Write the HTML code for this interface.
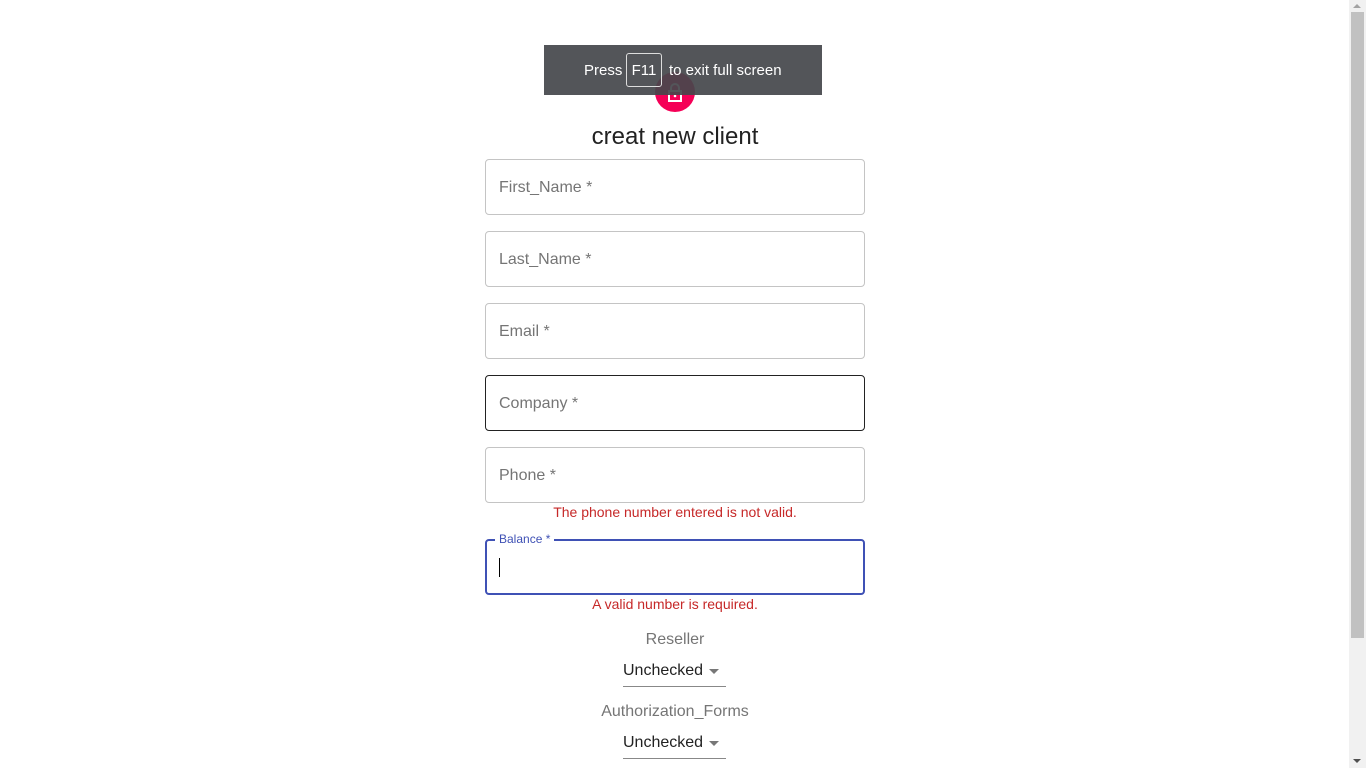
<!DOCTYPE html>
<html><head><meta charset="utf-8"><style>
*{margin:0;padding:0;box-sizing:border-box}
body{width:1366px;height:768px;overflow:hidden;background:#fff;font-family:"Liberation Sans",Roboto,sans-serif;position:relative}
.a{position:absolute}
.f{position:absolute;left:485px;width:380px;height:56px;border:1px solid #c4c4c4;border-radius:4px}
.f span{position:absolute;left:13px;top:19px;font-size:16px;color:#757575}
.err{position:absolute;left:485px;width:380px;text-align:center;font-size:14px;color:#c62828}
.lbl{position:absolute;left:485px;width:380px;text-align:center;font-size:16px;color:#757575}
.sel{position:absolute;left:623px;width:103px;height:26px;border-bottom:1px solid #888;font-size:16px;color:#222;padding-top:1px}
.sel:after{content:"";position:absolute;right:7px;top:8px;border-left:5px solid transparent;border-right:5px solid transparent;border-top:5px solid #777}
</style></head><body>
<div class="a" style="left:655px;top:72px;width:40px;height:40px;border-radius:50%;background:#f50057"></div>
<svg class="a" style="left:666px;top:82px" width="18" height="22" viewBox="0 0 18 22"><path d="M5 9V6a4 4 0 0 1 8 0v3" fill="none" stroke="#fff" stroke-width="2"/><rect x="3" y="9" width="12" height="10" fill="none" stroke="#fff" stroke-width="2"/><circle cx="9" cy="14" r="1.3" fill="#fff"/></svg>
<div class="a" style="left:544px;top:45px;width:278px;height:50px;background:rgba(68,71,75,0.92)"></div>
<div class="a" style="left:584px;top:62px;font-size:15px;color:#fff">Press</div>
<div class="a" style="left:626px;top:53px;width:36px;height:34px;border:1px solid #ddd;border-radius:3px;color:#fff;font-size:15px;text-align:center;line-height:33px">F11</div>
<div class="a" style="left:669px;top:62px;font-size:15px;color:#fff">to exit full screen</div>
<div class="a" style="left:485px;width:380px;top:123px;text-align:center;font-size:24px;color:#222">creat new client</div>
<div class="f" style="top:159px"><span>First_Name *</span></div>
<div class="f" style="top:231px"><span>Last_Name *</span></div>
<div class="f" style="top:303px"><span>Email *</span></div>
<div class="f" style="top:375px;border-color:#222"><span>Company *</span></div>
<div class="f" style="top:447px"><span>Phone *</span></div>
<div class="err" style="top:504px">The phone number entered is not valid.</div>
<div class="f" style="top:539px;border:2px solid #3f51b5"></div>
<div class="a" style="left:495px;top:532px;background:#fff;padding:0 4px;font-size:12px;color:#3f51b5">Balance *</div>
<div class="a" style="left:499px;top:558px;width:1px;height:19px;background:#000"></div>
<div class="err" style="top:596px">A valid number is required.</div>
<div class="lbl" style="top:631px">Reseller</div>
<div class="sel" style="top:661px">Unchecked</div>
<div class="lbl" style="top:703px">Authorization_Forms</div>
<div class="sel" style="top:733px">Unchecked</div>
<div class="a" style="left:1349px;top:0;width:17px;height:768px;background:#f1f1f1"></div>
<div class="a" style="left:1351px;top:12px;width:13px;height:626px;background:#c1c1c1"></div>
<div class="a" style="left:1353px;top:4px;border-left:4px solid transparent;border-right:4px solid transparent;border-bottom:4px solid #a3a3a3"></div>
<div class="a" style="left:1353px;top:759px;border-left:4px solid transparent;border-right:4px solid transparent;border-top:4px solid #505050"></div>
</body></html>
